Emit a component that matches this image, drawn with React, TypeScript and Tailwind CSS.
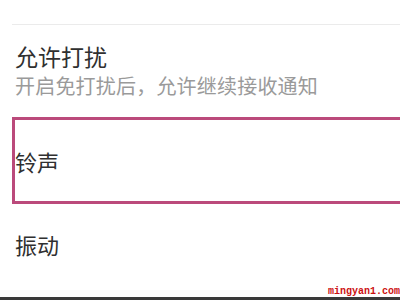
export default function App() {
  const cjk = { fontFamily: '"Noto Sans CJK SC", "Noto Sans", sans-serif' };
  return (
    <div className="w-[400px] h-[300px] bg-white relative overflow-hidden flex flex-col" style={cjk}>
      <div className="h-[24px] shrink-0" />
      <div className="ml-[12px] h-px bg-[#ebebeb] shrink-0" />
      <div className="pl-[15px] mt-[20px] text-[23px] leading-[23px] text-[#303030]">允许打扰</div>
      <div className="pl-[15px] mt-[8px] text-[20px] leading-[20px] tracking-[0.2px] text-[#9a9a9a]">开启免打扰后，允许继续接收通知</div>
      <div className="ml-[12px] mt-[21px] h-[87px] w-[400px] border-[3px] border-[#bb4a7b] flex items-center shrink-0">
        <span className="text-[22px] leading-[22px] text-[#303030]">铃声</span>
      </div>
      <div className="pl-[15px] mt-[29px] text-[22px] leading-[22px] text-[#303030]">振动</div>
      <div className="flex-1" />
      <div className="flex justify-end h-[10px] items-end">
        <span
          className="text-[10px] leading-[10px] font-bold text-[#cc1111]"
          style={{ fontFamily: '"Liberation Mono", "DejaVu Sans Mono", monospace' }}
        >
          mingyan1.com
        </span>
      </div>
      <div className="h-[3px] bg-[#3a3a3a] shrink-0" />
    </div>
  );
}
